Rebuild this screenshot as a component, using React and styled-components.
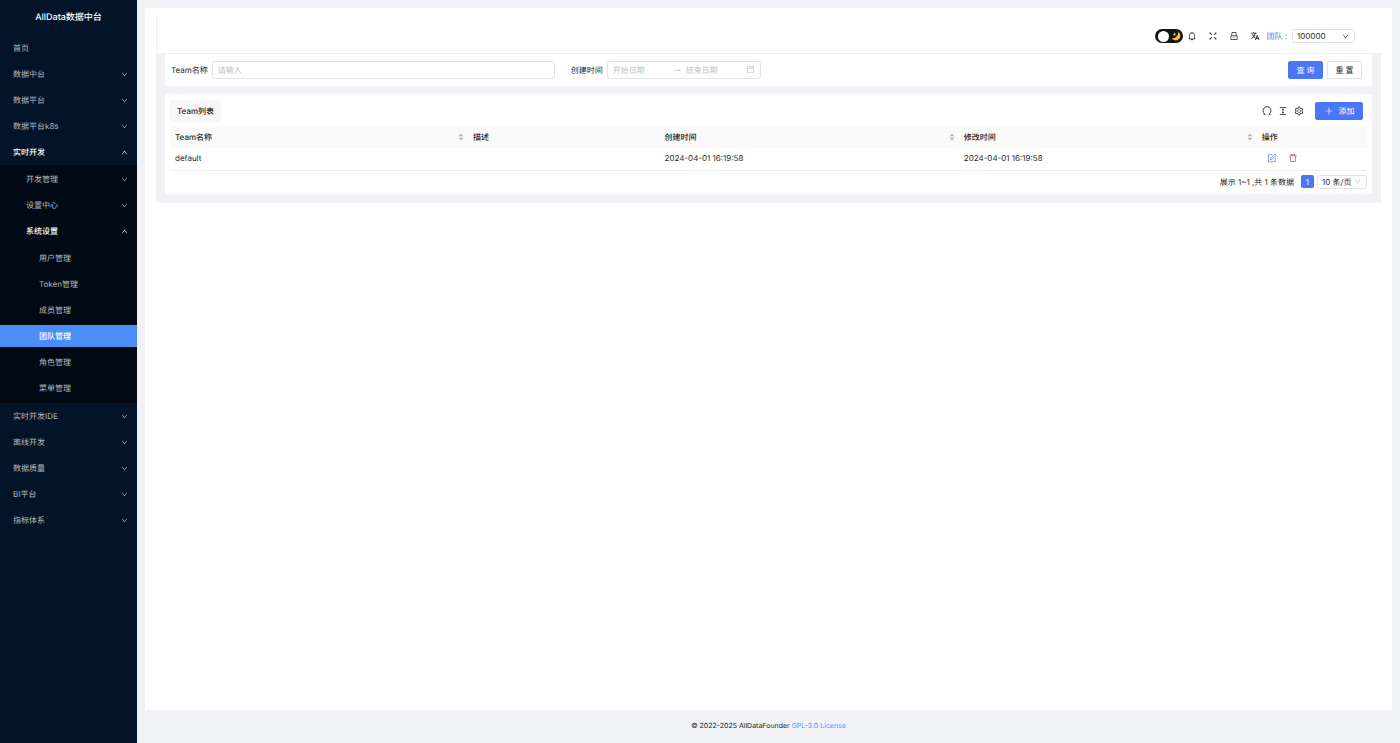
import styled, { createGlobalStyle } from "styled-components";
import {
  AiOutlineBell,
  AiOutlineCalendar,
  AiOutlineColumnHeight,
  AiOutlineDelete,
  AiOutlineDown,
  AiOutlineFullscreen,
  AiOutlineLock,
  AiOutlinePlus,
  AiOutlineSetting,
  AiOutlineSwapRight,
  AiOutlineUp,
} from "react-icons/ai";
import { IoLanguage } from "react-icons/io5";

const menu = [
  { name: "首页" },
  { name: "数据中台", children: [] },
  { name: "数据平台", children: [] },
  { name: "数据平台k8s", children: [] },
  {
    name: "实时开发",
    open: true,
    children: [
      { name: "开发管理", children: [] },
      { name: "设置中心", children: [] },
      {
        name: "系统设置",
        open: true,
        children: [
          { name: "用户管理" },
          { name: "Token管理" },
          { name: "成员管理" },
          { name: "团队管理", active: true },
          { name: "角色管理" },
          { name: "菜单管理" },
        ],
      },
    ],
  },
  { name: "实时开发IDE", children: [] },
  { name: "离线开发", children: [] },
  { name: "数据质量", children: [] },
  { name: "BI平台", children: [] },
  { name: "指标体系", children: [] },
];

const columns = [
  { title: "Team名称", width: "24.9%", sorter: true },
  { title: "描述", width: "16%" },
  { title: "创建时间", width: "25%", sorter: true },
  { title: "修改时间", width: "24.9%", sorter: true },
  { title: "操作", width: "9.2%" },
];

const rows = [
  {
    name: "default",
    description: "",
    createTime: "2024-04-01 16:19:58",
    modifyTime: "2024-04-01 16:19:58",
  },
];

const MenuItems = ({ items, level = 0 }) => (
  <>
    {items.map((item) => (
      <li key={item.name}>
        {item.children ? (
          <MenuButton type="button" $level={level} $open={item.open} aria-expanded={!!item.open}>
            {item.name}
            {item.open ? <AiOutlineUp /> : <AiOutlineDown />}
          </MenuButton>
        ) : (
          <MenuLink href="#" $level={level} $active={item.active}>
            {item.name}
          </MenuLink>
        )}
        {item.open && (
          <SubMenu>
            <MenuItems items={item.children} level={level + 1} />
          </SubMenu>
        )}
      </li>
    ))}
  </>
);

const Moon = () => (
  <svg viewBox="0 0 16 16" width="10" height="10" aria-hidden="true">
    <path d="M11.5 1A7.600 7.600 0 1 1 1 11.500C4 12 6.500 11 8 9.500C10.500 7.500 12 4.500 11.500 1Z" fill="#fcbf3b" />
    <path d="M5.500 2.500L6.300 4.200L8 4.500L6.800 5.700L7 7.500L5.500 6.700L4 7.500L4.200 5.700L3 4.500L4.700 4.200Z" fill="#fcd36b" />
  </svg>
);

const Refresh = () => (
  <svg viewBox="0 0 24 24" fill="none" stroke="currentColor" strokeWidth="2.2" aria-hidden="true">
    <path d="M3.500 20H7.500L6 18.500A9.500 9.500 0 1 1 18 18.500L16.500 20H20.500" />
  </svg>
);

const Edit = () => (
  <svg viewBox="0 0 24 24" fill="none" stroke="currentColor" strokeWidth="1.8" aria-hidden="true">
    <path d="M13 4H3.500V21H20V12" />
    <path d="M19 2.500L22 5.500L12 15.500L8 16.500L9 12.500Z" />
  </svg>
);

const App = () => {
  return (
    <Layout>
      <GlobalStyle />
      <Sidebar>
        <Brand>AllData数据中台</Brand>
        <nav>
          <Menu>
            <MenuItems items={menu} />
          </Menu>
        </nav>
      </Sidebar>

      <Main>
        <Content>
          <Header>
            <ThemeSwitch type="button" role="switch" aria-checked="false" aria-label="主题">
              <i />
              <Moon />
            </ThemeSwitch>
            <HeaderIcons>
              <IconButton type="button" aria-label="通知"><AiOutlineBell /></IconButton>
              <IconButton type="button" aria-label="全屏"><AiOutlineFullscreen /></IconButton>
              <IconButton type="button" aria-label="锁屏"><AiOutlineLock /></IconButton>
              <IconButton type="button" aria-label="语言"><IoLanguage /></IconButton>
            </HeaderIcons>
            <TeamLabel htmlFor="team">团队 :</TeamLabel>
            <SelectBox $width="63px">
              <select id="team" defaultValue="100000">
                <option>100000</option>
              </select>
              <AiOutlineDown />
            </SelectBox>
          </Header>

          <Page>
            <SearchCard>
              <label htmlFor="teamName">Team名称</label>
              <TextInput id="teamName" type="text" placeholder="请输入" autoComplete="off" />
              <label htmlFor="startDate">创建时间</label>
              <RangePicker>
                <input id="startDate" type="text" placeholder="开始日期" />
                <AiOutlineSwapRight />
                <input type="text" placeholder="结束日期" aria-label="结束日期" />
                <AiOutlineCalendar />
              </RangePicker>
              <Actions>
                <Button type="submit" $primary>查 询</Button>
                <Button type="reset">重 置</Button>
              </Actions>
            </SearchCard>

            <TableCard>
              <Toolbar>
                <Title>Team列表</Title>
                <Tools>
                  <IconButton type="button" aria-label="刷新"><Refresh /></IconButton>
                  <IconButton type="button" aria-label="密度"><AiOutlineColumnHeight /></IconButton>
                  <IconButton type="button" aria-label="列设置"><AiOutlineSetting /></IconButton>
                </Tools>
                <Button type="button" $primary $wide>
                  <AiOutlinePlus />
                  添加
                </Button>
              </Toolbar>

              <Table>
                <colgroup>
                  {columns.map((col) => (
                    <Col key={col.title} $width={col.width} />
                  ))}
                </colgroup>
                <thead>
                  <tr>
                    {columns.map((col) => (
                      <th key={col.title}>
                        <HeadCell>
                          {col.title}
                          {col.sorter && (
                            <svg viewBox="0 0 6 8" width="6" height="8" aria-hidden="true">
                              <path d="M3 0.500L5.500 3.200H0.500ZM3 7.500L0.500 4.800H5.500Z" fill="#b5b5b5" />
                            </svg>
                          )}
                        </HeadCell>
                      </th>
                    ))}
                  </tr>
                </thead>
                <tbody>
                  {rows.map((row) => (
                    <tr key={row.name}>
                      <td>{row.name}</td>
                      <td>{row.description}</td>
                      <td>{row.createTime}</td>
                      <td>{row.modifyTime}</td>
                      <td>
                        <RowActions>
                          <IconButton type="button" $color="#5a7ff0" aria-label="编辑"><Edit /></IconButton>
                          <IconButton type="button" $color="#e0475b" aria-label="删除"><AiOutlineDelete /></IconButton>
                        </RowActions>
                      </td>
                    </tr>
                  ))}
                </tbody>
              </Table>

              <Pagination>
                <span>展示 1~1 ,共 1 条数据</span>
                <PageNumber type="button" aria-current="page">1</PageNumber>
                <SelectBox $width="50px" $muted>
                  <select aria-label="每页条数" defaultValue="10 条/页">
                    <option>10 条/页</option>
                  </select>
                  <AiOutlineDown />
                </SelectBox>
              </Pagination>
            </TableCard>
          </Page>
        </Content>

        <Footer>
          © 2022-2025 AllDataFounder <a href="#">GPL-3.0 License</a>
        </Footer>
      </Main>
    </Layout>
  );
};

const GlobalStyle = createGlobalStyle`
  * {
    box-sizing: border-box;
  }

  body {
    margin: 0;
    color: #262626;
    font-family: Inter, "Noto Sans CJK SC", sans-serif;
    font-size: 8px;
    line-height: 12px;
    text-rendering: geometricPrecision;
  }

  button, input, select {
    font: inherit;
    color: inherit;
    text-rendering: inherit;
  }

  button {
    cursor: pointer;
  }

  a {
    text-decoration: none;
  }

  svg {
    flex: none;
  }
`;

const Layout = styled.div`
  display: flex;
  min-height: 100vh;
  background-color: #f0f2f5;
`;

const Sidebar = styled.aside`
  flex: 0 0 137px;
  background-color: #031428;
`;

const Brand = styled.div`
  height: 35px;
  line-height: 35px;
  color: #fff;
  font-size: 9px;
  font-weight: 500;
  text-align: center;
`;

const Menu = styled.ul`
  margin: 0;
  padding: 0;
  list-style: none;
`;

const SubMenu = styled(Menu)`
  padding: 1px 0;
  background-color: #010a14;
`;

const MenuLink = styled.a`
  display: flex;
  align-items: center;
  justify-content: space-between;
  width: 100%;
  height: 22px;
  border: 0;
  border-block: 2px solid transparent;
  box-sizing: content-box;
  background: ${({ $active }) => ($active ? "#4a8ff7" : "none")};
  background-clip: padding-box;
  padding: 0;
  text-indent: ${({ $level }) => 13 + $level * 13}px;
  color: ${({ $active, $open }) => ($active || $open ? "#fff" : "#b3b8be")};
  font-weight: ${({ $active, $open }) => ($active || $open ? 500 : 400)};

  svg {
    width: 7px;
    height: 7px;
    margin-right: 9px;
  }
`;

const MenuButton = styled(MenuLink).attrs({ as: "button" })``;

const Main = styled.main`
  flex: 1;
  min-width: 0;
  display: flex;
  flex-direction: column;
  padding: 8px 8px 0;
`;

const Content = styled.section`
  flex: 1;
  padding: 8px 11px;
  background-color: #fff;
`;

const Header = styled.header`
  display: flex;
  align-items: center;
  justify-content: flex-end;
  height: 38px;
  padding: 3px 26px 0 0;
  border: solid #f0f0f0;
  border-width: 0 0 1px 1px;
`;

const ThemeSwitch = styled.button`
  display: flex;
  align-items: center;
  justify-content: space-between;
  width: 28px;
  height: 14px;
  padding: 0 2px 0 3px;
  border: 0;
  border-radius: 14px;
  background-color: #151515;

  i {
    width: 11px;
    height: 11px;
    border-radius: 50%;
    background-color: #fff;
  }
`;

const HeaderIcons = styled.div`
  display: flex;
  gap: 11px;
  margin: 0 6px 0 4px;
`;

const IconButton = styled.button`
  display: flex;
  padding: 0;
  border: 0;
  background: none;
  color: ${({ $color }) => $color || "#262626"};

  svg {
    width: 10px;
    height: 10px;
  }
`;

const TeamLabel = styled.label`
  margin-right: 5px;
  color: #4a7df0;
`;

const SelectBox = styled.div`
  display: flex;
  align-items: center;
  width: ${({ $width }) => $width};
  height: 14px;
  border: 1px solid #e2e2e2;
  border-radius: 3px;
  background-color: #fff;

  select {
    flex: 1;
    min-width: 0;
    padding: 0 0 0 4px;
    border: 0;
    outline: 0;
    appearance: none;
    background: none;
  }

  svg {
    width: 7px;
    height: 7px;
    margin-right: 5px;
    color: ${({ $muted }) => ($muted ? "#bfbfbf" : "#262626")};
  }
`;

const Page = styled.div`
  display: flex;
  flex-direction: column;
  gap: 8px;
  padding: 0 9px 9px;
  background-color: #f0f2f5;
`;

const SearchCard = styled.form`
  display: flex;
  align-items: center;
  height: 32px;
  padding: 0 10px 1px 6px;
  border-radius: 0 0 3px 3px;
  background-color: #fff;

  label {
    margin-right: 4px;
  }
`;

const TextInput = styled.input`
  flex: 0 1 343px;
  min-width: 0;
  height: 18px;
  margin-right: 16px;
  padding: 0 5px;
  border: 1px solid #e2e2e2;
  border-radius: 3px;
  outline: 0;

  &::placeholder {
    color: #bfbfbf;
  }
`;

const RangePicker = styled.div`
  display: flex;
  align-items: center;
  flex: 0 0 154px;
  height: 18px;
  padding: 0 5px;
  border: 1px solid #e2e2e2;
  border-radius: 3px;
  color: #bfbfbf;

  input {
    flex: 1;
    width: 0;
    padding: 0;
    border: 0;
    outline: 0;
    background: none;

    &::placeholder {
      color: #bfbfbf;
    }
  }

  svg {
    width: 9px;
    height: 9px;
    margin-right: 4px;

    &:last-child {
      margin-right: 0;
    }
  }
`;

const Actions = styled.div`
  display: flex;
  gap: 4px;
  margin-left: auto;
`;

const Button = styled.button`
  display: flex;
  align-items: center;
  justify-content: center;
  gap: 5px;
  width: ${({ $wide }) => ($wide ? "48px" : "35px")};
  height: 18px;
  padding: 0;
  border: 1px solid ${({ $primary }) => ($primary ? "#4a77f5" : "#e2e2e2")};
  border-radius: 2px;
  background-color: ${({ $primary }) => ($primary ? "#4a77f5" : "#fff")};
  color: ${({ $primary }) => ($primary ? "#fff" : "#262626")};

  svg {
    width: 10px;
    height: 10px;
  }
`;

const TableCard = styled.section`
  padding: 6px 5px 5px;
  border-radius: 3px;
  background-color: #fff;
`;

const Toolbar = styled.div`
  display: flex;
  align-items: center;
  margin-bottom: 4px;
  padding-right: 4px;
`;

const Title = styled.h2`
  margin: 0 auto 0 0;
  padding: 5px 7px;
  border-radius: 3px;
  background-color: #f7f7f7;
  font-size: 8px;
  font-weight: 500;
`;

const Tools = styled.div`
  display: flex;
  gap: 6px;
  margin-right: 11px;
`;

const Table = styled.table`
  width: 100%;
  table-layout: fixed;
  border-collapse: collapse;
  text-align: left;

  th,
  td {
    height: 22px;
    padding: 0 4px 0 5px;
  }

  th {
    background-color: #fafafa;
    font-weight: 500;
  }

  td {
    padding-bottom: 1px;
    border-bottom: 1px solid #f0f0f0;
  }
`;

const Col = styled.col`
  width: ${({ $width }) => $width};
`;

const HeadCell = styled.div`
  display: flex;
  align-items: center;
  justify-content: space-between;
`;

const RowActions = styled.div`
  display: flex;
  gap: 11px;
  padding-left: 5px;
`;

const Pagination = styled.div`
  display: flex;
  align-items: center;
  justify-content: flex-end;
  gap: 3px;
  margin-top: 4px;

  span {
    margin-right: 4px;
  }
`;

const PageNumber = styled.button`
  width: 13px;
  height: 13px;
  padding: 0;
  border: 0;
  border-radius: 2px;
  background-color: #4a77f5;
  color: #fff;
`;

const Footer = styled.footer`
  padding: 10px 0 11px;
  font-size: 7px;
  text-align: center;

  a {
    color: #4a9af5;
  }
`;

export default App;
